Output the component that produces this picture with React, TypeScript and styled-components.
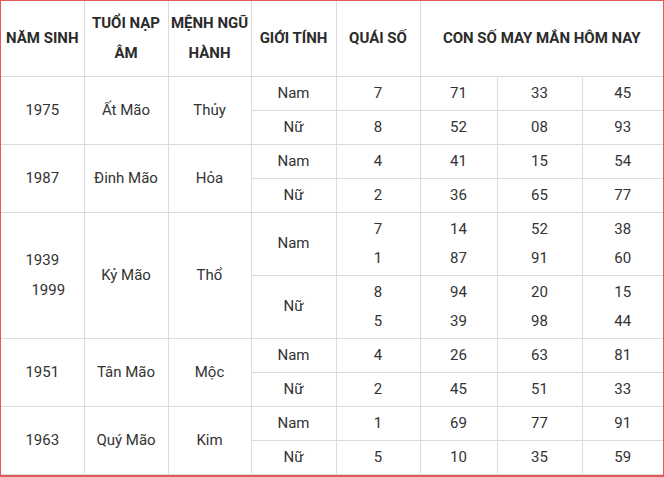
import React from "react";
import styled, { createGlobalStyle } from "styled-components";

const GlobalStyle = createGlobalStyle`
  html, body {
    margin: 0;
    padding: 0;
    background: #fff;
  }
  body {
    font-family: Roboto, "Noto Sans", "Liberation Sans", sans-serif;
  }
`;

type Gender = {
  label: string;
  quai: string[];
  numbers: string[][];
  tall?: boolean;
};

type Row = {
  years: string[];
  tuoi: string;
  menh: string;
  genders: Gender[];
};

const rows: Row[] = [
  {
    years: ["1975"],
    tuoi: "Ất Mão",
    menh: "Thủy",
    genders: [
      { label: "Nam", quai: ["7"], numbers: [["71", "33", "45"]] },
      { label: "Nữ", quai: ["8"], numbers: [["52", "08", "93"]] },
    ],
  },
  {
    years: ["1987"],
    tuoi: "Đinh Mão",
    menh: "Hỏa",
    genders: [
      { label: "Nam", quai: ["4"], numbers: [["41", "15", "54"]] },
      { label: "Nữ", quai: ["2"], numbers: [["36", "65", "77"]] },
    ],
  },
  {
    years: ["1939", "1999"],
    tuoi: "Kỷ Mão",
    menh: "Thổ",
    genders: [
      {
        label: "Nam",
        quai: ["7", "1"],
        numbers: [
          ["14", "52", "38"],
          ["87", "91", "60"],
        ],
        tall: true,
      },
      {
        label: "Nữ",
        quai: ["8", "5"],
        numbers: [
          ["94", "20", "15"],
          ["39", "98", "44"],
        ],
        tall: true,
      },
    ],
  },
  {
    years: ["1951"],
    tuoi: "Tân Mão",
    menh: "Mộc",
    genders: [
      { label: "Nam", quai: ["4"], numbers: [["26", "63", "81"]] },
      { label: "Nữ", quai: ["2"], numbers: [["45", "51", "33"]] },
    ],
  },
  {
    years: ["1963"],
    tuoi: "Quý Mão",
    menh: "Kim",
    genders: [
      { label: "Nam", quai: ["1"], numbers: [["69", "77", "91"]] },
      { label: "Nữ", quai: ["5"], numbers: [["10", "35", "59"]] },
    ],
  },
];

function App() {
  return (
    <>
      <GlobalStyle />
      <Frame>
        <Table>
          <colgroup>
            <col style={{ width: 83 }} />
            <col style={{ width: 84 }} />
            <col style={{ width: 83 }} />
            <col style={{ width: 85 }} />
            <col style={{ width: 84 }} />
            <col style={{ width: 77 }} />
            <col style={{ width: 85 }} />
            <col style={{ width: 81 }} />
          </colgroup>
          <thead>
            <HeadRow>
              <HeadCell>NĂM SINH</HeadCell>
              <HeadCell>
                TUỔI NẠP
                <br />
                ÂM
              </HeadCell>
              <HeadCell>
                MỆNH NGŨ
                <br />
                HÀNH
              </HeadCell>
              <HeadCell>GIỚI TÍNH</HeadCell>
              <HeadCell>QUÁI SỐ</HeadCell>
              <HeadCell colSpan={3}>CON SỐ MAY MẮN HÔM NAY</HeadCell>
            </HeadRow>
          </thead>
          <tbody>
            {rows.map((row) =>
              row.genders.map((g, gi) => (
                <BodyRow key={row.tuoi + g.label} $tall={g.tall}>
                  {gi === 0 && (
                    <>
                      <Cell rowSpan={2}>
                        {row.years.map((y, yi) => (
                          <Year key={y} $shift={yi > 0}>
                            {y}
                          </Year>
                        ))}
                      </Cell>
                      <Cell rowSpan={2}>{row.tuoi}</Cell>
                      <Cell rowSpan={2}>{row.menh}</Cell>
                    </>
                  )}
                  <Cell>{g.label}</Cell>
                  <Cell>
                    {g.quai.map((q, qi) => (
                      <Line key={qi}>{q}</Line>
                    ))}
                  </Cell>
                  {[0, 1, 2].map((c) => (
                    <Cell key={c}>
                      {g.numbers.map((n, ni) => (
                        <Line key={ni}>{n[c]}</Line>
                      ))}
                    </Cell>
                  ))}
                </BodyRow>
              ))
            )}
          </tbody>
        </Table>
      </Frame>
    </>
  );
}

export default App;

const Frame = styled.div`
  width: 664px;
  height: 477px;
  box-sizing: border-box;
  border: 1px solid #e05a5a;
  border-bottom-width: 2px;
  overflow: hidden;
`;

const Table = styled.table`
  width: 662px;
  table-layout: fixed;
  border-collapse: collapse;
  color: #333;
  font-size: 15px;

  td,
  th {
    border: 1px solid #dcdcdc;
  }
  tr:first-child th {
    border-top: none;
  }
  th:first-child,
  td:first-child {
    border-left: none;
  }
  th:last-child,
  td:last-child {
    border-right: none;
  }
`;

const HeadRow = styled.tr`
  height: 75px;
`;

const HeadCell = styled.th`
  padding: 0 2px;
  font-weight: 700;
  font-size: 15px;
  line-height: 30px;
  color: #2b2b2b;
  text-align: center;
  vertical-align: middle;
  white-space: nowrap;
`;

const BodyRow = styled.tr<{ $tall?: boolean }>`
  height: ${(p) => (p.$tall ? "63px" : "34px")};
`;

const Cell = styled.td`
  padding: 0;
  text-align: center;
  vertical-align: middle;
  line-height: 29px;
`;

const Line = styled.div`
  line-height: 29px;
`;

const Year = styled.div<{ $shift?: boolean }>`
  line-height: 30px;
  padding-left: ${(p) => (p.$shift ? "12px" : "0")};
`;
